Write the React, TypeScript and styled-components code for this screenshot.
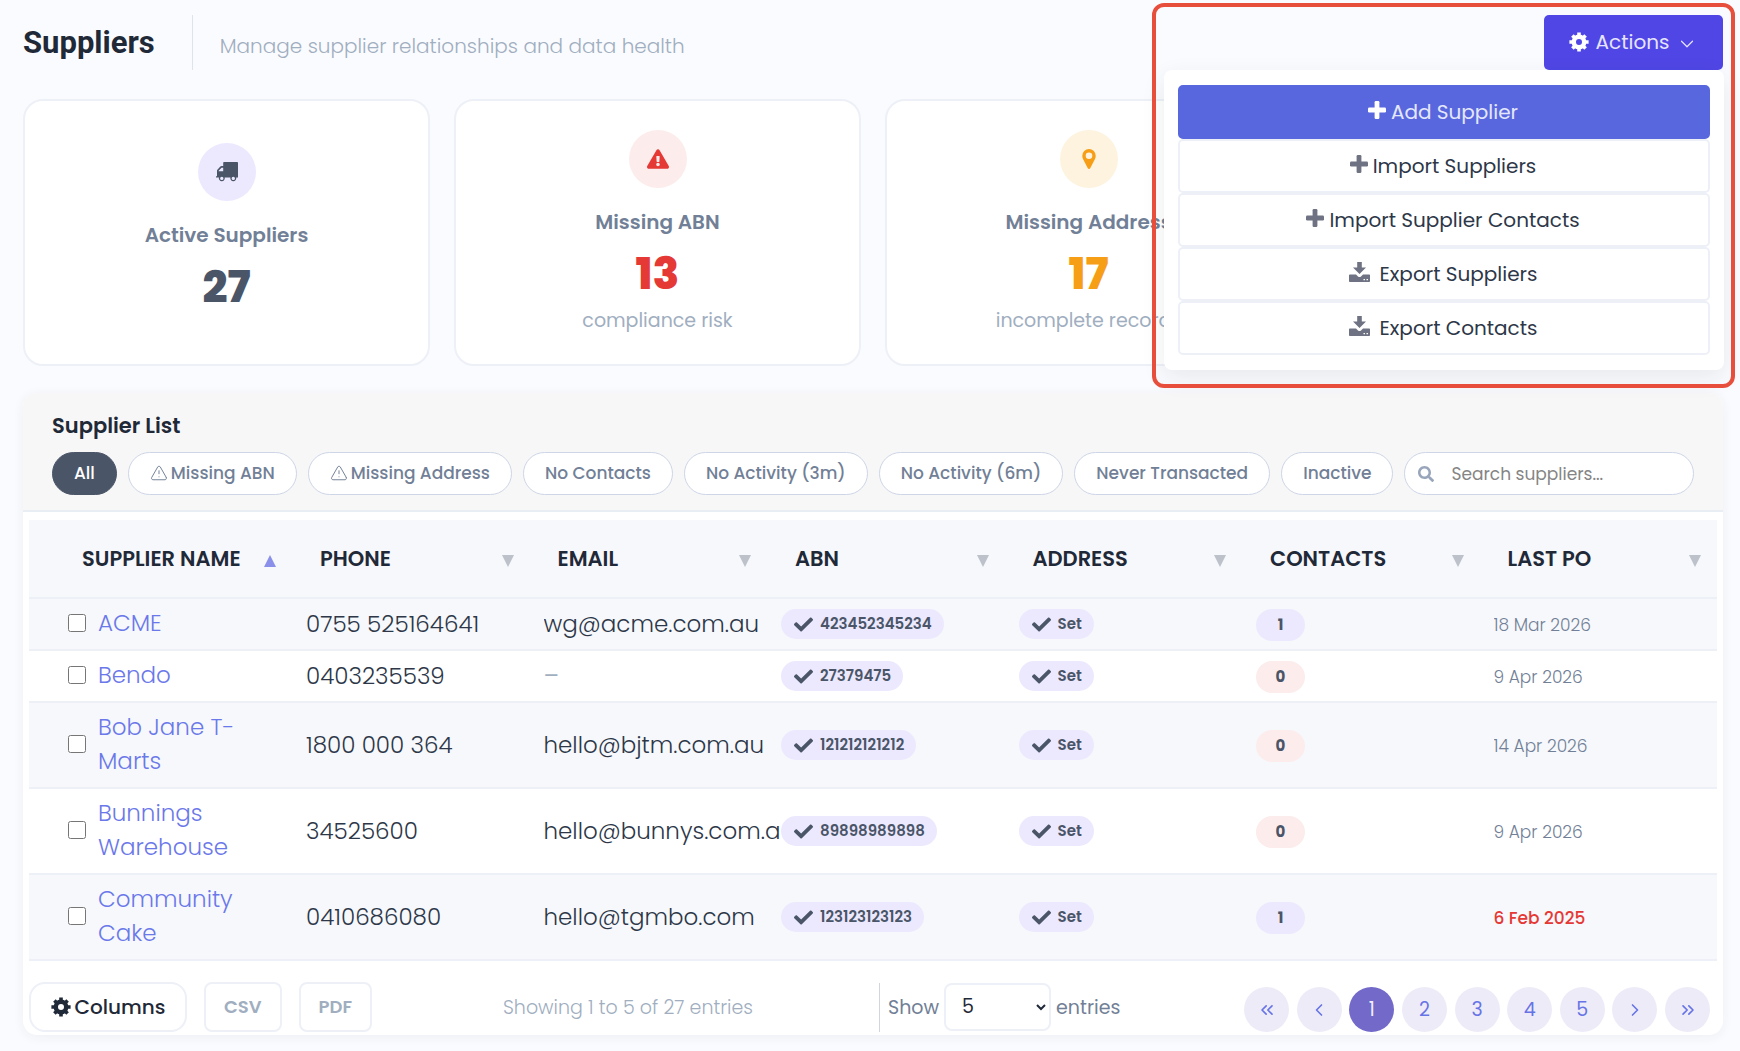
import React, { useState } from "react";
import styled, { createGlobalStyle, css } from "styled-components";
import { FaCheck, FaSearch, FaExclamationTriangle } from "react-icons/fa";
import { ChevronDown, ChevronLeft, ChevronRight, ChevronsLeft, ChevronsRight, TriangleAlert } from "lucide-react";

const font = `Poppins, Inter, "Open Sans", sans-serif`;

const color = {
  ink: "#2d3748",
  slate: "#4a5568",
  grey: "#718096",
  mute: "#a0aec0",
  line: "#edf0f7",
  pillLine: "#cdd5e6",
  lilac: "#ece9fe",
  rose: "#fdecec",
  link: "#6b78ea",
  red: "#e53935",
  orange: "#f59e16",
};

const GlobalStyle = createGlobalStyle`
  *, *::before, *::after { box-sizing: border-box; }
  body { margin: 0; background: #fafbfe; color: ${color.ink}; font-family: ${font}; }
  button, input, select { font-family: inherit; margin: 0; }
`;

const Page = styled.main`
  position: relative;
  padding: 15px 17px 16px 23px;
`;

const Header = styled.header`
  display: flex;
  align-items: stretch;
  height: 55px;
  margin-bottom: 29px;
`;

const Title = styled.h1`
  margin: 0;
  padding: 1px 37px 0 0;
  border-right: 1px solid #dfe3ea;
  font-family: Roboto, sans-serif;
  font-size: 31px;
  line-height: 54px;
  font-weight: 700;
  color: #1f2937;
`;

const Subtitle = styled.p`
  margin: 0 auto 0 27px;
  padding-top: 4px;
  font-size: 20px;
  line-height: 54px;
  font-weight: 300;
  color: ${color.mute};
`;

const Menu = styled.div`
  position: relative;
  z-index: 2;
`;

const ActionsButton = styled.button`
  display: flex;
  align-items: center;
  justify-content: center;
  gap: 7px;
  width: 179px;
  height: 55px;
  padding: 0 0 2px;
  border: 0;
  border-radius: 5px;
  background: #4f46e5;
  color: #e6e4ff;
  font-size: 20px;
  svg:first-child { color: #fff; }
  svg:last-child { margin-top: 4px; }
`;

const MenuList = styled.div`
  position: absolute;
  top: 100%;
  right: -1px;
  display: flex;
  flex-direction: column;
  width: 560px;
  padding: 15px 14px;
  border-radius: 8px;
  background: #fff;
  box-shadow: 0 8px 24px rgba(40, 50, 70, 0.09);
`;

const MenuItem = styled.button<{ $primary?: boolean; $gap: number }>`
  display: flex;
  align-items: center;
  justify-content: center;
  gap: ${(p) => p.$gap}px;
  height: 54px;
  padding: 0 2px 1px 0;
  border: 2px solid ${color.line};
  border-radius: 5px;
  background: #fff;
  color: ${color.ink};
  font-size: 20px;
  svg { margin-bottom: 3px; color: #6f7282; }
  ${(p) =>
    p.$primary &&
    css`
      border-color: #5867dd;
      background: #5867dd;
      color: #e4e7fc;
      svg { color: #fff; }
    `}
`;

const Highlight = styled.div`
  position: absolute;
  top: 3px;
  right: 5px;
  z-index: 3;
  width: 583px;
  height: 385px;
  border: 4px solid #e74f3c;
  border-radius: 12px;
  pointer-events: none;
`;

const Cards = styled.section`
  display: grid;
  grid-template-columns: repeat(4, 1fr);
  gap: 24px;
  margin-bottom: 27px;
`;

const Card = styled.article`
  display: flex;
  flex-direction: column;
  align-items: center;
  justify-content: center;
  height: 267px;
  padding-bottom: 2px;
  border: 2px solid ${color.line};
  border-radius: 20px;
  background: #fff;
`;

const CardIcon = styled.span<{ $bg: string; $fg: string }>`
  display: flex;
  align-items: center;
  justify-content: center;
  width: 58px;
  height: 58px;
  margin-bottom: 21px;
  border-radius: 50%;
  background: ${(p) => p.$bg};
  color: ${(p) => p.$fg};
`;

const CardLabel = styled.h2`
  margin: 0;
  font-size: 20px;
  line-height: 27px;
  font-weight: 600;
  color: ${color.grey};
`;

const CardValue = styled.strong<{ $fg: string }>`
  padding: 11px 0 6px;
  font-size: 44px;
  line-height: 54px;
  font-weight: 800;
  color: ${(p) => p.$fg};
`;

const CardNote = styled.span`
  font-size: 19px;
  line-height: 27px;
  color: ${color.mute};
`;

const Panel = styled.section`
  border-radius: 14px;
  background: #fff;
  box-shadow: 0 2px 12px rgba(40, 50, 80, 0.06);
`;

const PanelHead = styled.div`
  padding: 18px 29px 15px;
  border-bottom: 2px solid #e9edf4;
  border-radius: 14px 14px 0 0;
  background: #f7f7f7;
`;

const PanelTitle = styled.h2`
  margin: 0 0 11px;
  font-size: 21px;
  line-height: 30px;
  font-weight: 600;
  color: #1f2937;
`;

const Filters = styled.div`
  display: flex;
  gap: 11px;
`;

const Pill = styled.button<{ $active?: boolean }>`
  display: flex;
  flex: none;
  align-items: center;
  gap: 3px;
  height: 43px;
  padding: 0 21px 1px;
  border: 1px solid ${(p) => (p.$active ? color.slate : color.pillLine)};
  border-radius: 22px;
  background: ${(p) => (p.$active ? color.slate : "#fff")};
  color: ${(p) => (p.$active ? "#fff" : color.grey)};
  font-size: 17px;
  font-weight: 500;
`;

const Search = styled.label`
  display: flex;
  flex: 1;
  align-items: center;
  gap: 17px;
  min-width: 0;
  height: 43px;
  padding: 0 13px;
  border: 1px solid ${color.pillLine};
  border-radius: 22px;
  background: #fff;
  color: #98a5ba;
  svg { flex: none; }
`;

const SearchInput = styled.input`
  flex: 1;
  min-width: 0;
  padding: 0;
  border: 0;
  outline: 0;
  background: transparent;
  font-size: 17px;
  color: ${color.slate};
  &::placeholder { color: #858585; }
`;

const TableWrap = styled.div`
  margin: 8px 6px 0;
  overflow: hidden;
`;

const Table = styled.table`
  width: calc(100% + 14px);
  table-layout: fixed;
  border-collapse: collapse;
`;

const Th = styled.th`
  height: 78px;
  padding: 0 30px 1px 14px;
  border-bottom: 2px solid ${color.line};
  background: #f6f8fc;
  font-size: 21px;
  font-weight: 600;
  text-align: left;
  color: #1f2937;
  &:first-child { width: 277px; padding-left: 53px; }
`;

const ThInner = styled.div`
  display: flex;
  align-items: center;
  justify-content: space-between;
  white-space: nowrap;
`;

const Arrow = styled.svg<{ $active?: boolean }>`
  flex: none;
  width: 12px;
  height: 12px;
  margin-top: 6px;
  fill: ${(p) => (p.$active ? "#8a90ea" : "#bcc1ca")};
`;

const Row = styled.tr`
  background: #fff;
  &:nth-child(odd) { background: #f6f8fc; }
`;

const Td = styled.td`
  padding: 8px 0;
  border-bottom: 2px solid ${color.line};
  overflow: hidden;
  font-size: 23px;
  line-height: 34px;
  font-weight: 300;
  white-space: nowrap;
  vertical-align: middle;
  &:first-child { padding: 7px 53px 9px 39px; white-space: normal; }
`;

const NameCell = styled.div`
  display: flex;
  align-items: center;
  gap: 12px;
`;

const Check = styled.input`
  flex: none;
  width: 18px;
  height: 18px;
`;

const NameLink = styled.a`
  color: ${color.link};
  text-decoration: none;
`;

const Dash = styled.span`
  font-weight: 400;
  color: ${color.mute};
`;

const Badge = styled.span`
  display: flex;
  align-items: center;
  gap: 7px;
  width: fit-content;
  height: 30px;
  padding: 0 12px 0 13px;
  border-radius: 15px;
  background: ${color.lilac};
  color: ${color.slate};
  font-size: 15px;
  font-weight: 600;
`;

const Count = styled.span<{ $empty: boolean }>`
  display: flex;
  align-items: center;
  justify-content: center;
  width: 49px;
  height: 32px;
  margin-top: 2px;
  border-radius: 16px;
  background: ${(p) => (p.$empty ? color.rose : color.lilac)};
  color: ${color.slate};
  font-size: 15px;
  font-weight: 700;
`;

const DateText = styled.time<{ $late?: boolean }>`
  display: block;
  padding-top: 3px;
  font-size: 17px;
  line-height: 31px;
  font-weight: ${(p) => (p.$late ? 500 : 300)};
  color: ${(p) => (p.$late ? color.red : color.grey)};
`;

const Footer = styled.footer`
  display: grid;
  grid-template-columns: 1fr 1fr;
  gap: 12px;
  padding: 21px 6px 3px;
`;

const FooterHalf = styled.div`
  display: flex;
  align-items: center;
  gap: 17px;
`;

const ColumnsButton = styled.button`
  display: flex;
  align-items: center;
  justify-content: center;
  gap: 4px;
  width: 158px;
  height: 50px;
  padding: 0;
  border: 2px solid ${color.line};
  border-radius: 16px;
  background: #fff;
  color: #1f2937;
  font-size: 20px;
  font-weight: 500;
`;

const ExportButton = styled.button`
  height: 50px;
  padding: 0 18px 2px;
  border: 2px solid ${color.line};
  border-radius: 8px;
  background: #fff;
  color: ${color.mute};
  font-size: 18px;
  font-weight: 600;
`;

const Showing = styled.span`
  flex: 1;
  font-size: 19px;
  font-weight: 300;
  text-align: center;
  color: ${color.mute};
`;

const PageSize = styled.label`
  display: flex;
  align-items: center;
  gap: 5px;
  height: 49px;
  padding-left: 8px;
  border-left: 1px solid #d2d5da;
  font-size: 19px;
  color: ${color.grey};
`;

const SizeSelect = styled.select`
  width: 107px;
  height: 48px;
  padding: 0 0 2px 12px;
  border: 2px solid ${color.line};
  border-radius: 8px;
  background: #fff;
  color: #1f2937;
  font-size: 19px;
`;

const Pager = styled.nav`
  display: flex;
  justify-content: space-between;
  width: 466px;
  margin: 5px 7px 0 auto;
`;

const PageButton = styled.button<{ $active?: boolean }>`
  display: flex;
  align-items: center;
  justify-content: center;
  width: 45px;
  height: 45px;
  padding: 0;
  border: 0;
  border-radius: 50%;
  background: ${(p) => (p.$active ? "#7269c9" : "#eeebf8")};
  color: ${(p) => (p.$active ? "#f1effc" : "#6674e6")};
  font-size: 19px;
`;

const GearIcon = () => (
  <svg width="20" height="20" viewBox="-10 -10 20 20" fill="none" stroke="currentColor">
    <circle r="5.200" strokeWidth="4.400" />
    <path
      strokeWidth="3.600"
      d="M0-6V-9.600M0 6V9.600M-6 0H-9.600M6 0H9.600M4.300-4.300 6.600-6.600M4.300 4.300 6.600 6.600M-4.300 4.300-6.600 6.600M-4.300-4.300-6.600-6.600"
    />
  </svg>
);

const PlusIcon = () => (
  <svg width="18" height="18" viewBox="0 0 18 18" fill="currentColor">
    <rect x="6.600" y="0" width="4.800" height="18" rx="1.200" />
    <rect x="0" y="6.600" width="18" height="4.800" rx="1.200" />
  </svg>
);

const TruckIcon = () => (
  <svg width="22" height="20" viewBox="0 0 22 20" fill="currentColor" fillRule="evenodd">
    <path d="M8 0h13.200c.5 0 .8.300.8.800V15.500h-1.800a3 3 0 1 1-5.800 0H8.700a3 3 0 1 1-5.800 0H0V14.300h1V8.800c0-.6.200-1 .6-1.400l2.500-2.600c.4-.5.900-.7 1.500-.7h1.600V.8c0-.5.300-.8.800-.8zM2.600 9.300h4.600V5.700H6c-.3 0-.5.100-.7.300L2.900 8.500c-.2.200-.3.500-.3.800zM5.800 14.700a1.700 1.700 0 1 0 0 3.400 1.700 1.700 0 0 0 0-3.400zM17.300 14.700a1.700 1.700 0 1 0 0 3.400 1.700 1.700 0 0 0 0-3.400z" />
  </svg>
);

const PinIcon = () => (
  <svg width="14" height="20" viewBox="0 0 14 20" fill="currentColor" fillRule="evenodd">
    <path d="M7 0a6.700 6.700 0 0 1 6.700 6.800c0 1.200-.2 2.200-.7 3.200L8.200 19.200c-.5 1-1.900 1-2.400 0L1 10C.5 9 .3 8 .3 6.800A6.700 6.700 0 0 1 7 0zm0 3.500a3.300 3.300 0 1 0 0 6.600 3.300 3.300 0 0 0 0-6.600z" />
  </svg>
);

const DownloadIcon = () => (
  <svg width="21" height="20" viewBox="0 0 21 20" fill="currentColor" fillRule="evenodd">
    <path d="M8.200 0h4.600v5.500h4.200L10.500 12 4 5.500h4.200z" />
    <path d="M0 13.500c0-.6.500-1 1-1h6l2 1.900c.9.800 2.100.8 3 0l2-1.900H20c.6 0 1 .4 1 1V19c0 .6-.4 1-1 1H1c-.5 0-1-.4-1-1zM14.500 17v1.200H16V17zm3 0v1.200H19V17z" />
  </svg>
);

const columns = ["SUPPLIER NAME", "PHONE", "EMAIL", "ABN", "ADDRESS", "CONTACTS", "LAST PO"];

const suppliers = [
  { name: "ACME", phone: "0755 525164641", email: "wg@acme.com.au", abn: "423452345234", contacts: 1, lastPo: "18 Mar 2026" },
  { name: "Bendo", phone: "0403235539", email: "", abn: "27379475", contacts: 0, lastPo: "9 Apr 2026" },
  { name: "Bob Jane T-Marts", phone: "1800 000 364", email: "hello@bjtm.com.au", abn: "121212121212", contacts: 0, lastPo: "14 Apr 2026" },
  { name: "Bunnings Warehouse", phone: "34525600", email: "hello@bunnys.com.au", abn: "89898989898", contacts: 0, lastPo: "9 Apr 2026" },
  { name: "Community Cake", phone: "0410686080", email: "hello@tgmbo.com", abn: "123123123123", contacts: 1, lastPo: "6 Feb 2025", late: true },
];

const filters = [
  { label: "All" },
  { label: "Missing ABN", warn: true },
  { label: "Missing Address", warn: true },
  { label: "No Contacts" },
  { label: "No Activity (3m)" },
  { label: "No Activity (6m)" },
  { label: "Never Transacted" },
  { label: "Inactive" },
];

const pages = ["1", "2", "3", "4", "5"];

export default function App() {
  const [filter, setFilter] = useState("All");
  const [page, setPage] = useState("1");

  return (
    <Page>
      <GlobalStyle />
      <Header>
        <Title>Suppliers</Title>
        <Subtitle>Manage supplier relationships and data health</Subtitle>
        <Menu>
          <ActionsButton type="button" aria-haspopup="true" aria-expanded="true">
            <GearIcon />
            Actions
            <ChevronDown size={22} strokeWidth={1.3} />
          </ActionsButton>
          <MenuList>
            <MenuItem type="button" $primary $gap={5}><PlusIcon />Add Supplier</MenuItem>
            <MenuItem type="button" $gap={5}><PlusIcon />Import Suppliers</MenuItem>
            <MenuItem type="button" $gap={5}><PlusIcon />Import Supplier Contacts</MenuItem>
            <MenuItem type="button" $gap={10}><DownloadIcon />Export Suppliers</MenuItem>
            <MenuItem type="button" $gap={10}><DownloadIcon />Export Contacts</MenuItem>
          </MenuList>
        </Menu>
      </Header>
      <Highlight />

      <Cards>
        <Card>
          <CardIcon $bg={color.lilac} $fg={color.slate}><TruckIcon /></CardIcon>
          <CardLabel>Active Suppliers</CardLabel>
          <CardValue $fg={color.slate}>27</CardValue>
        </Card>
        <Card>
          <CardIcon $bg={color.rose} $fg={color.red}><FaExclamationTriangle size={22} /></CardIcon>
          <CardLabel>Missing ABN</CardLabel>
          <CardValue $fg={color.red}>13</CardValue>
          <CardNote>compliance risk</CardNote>
        </Card>
        <Card>
          <CardIcon $bg="#fef3df" $fg={color.orange}><PinIcon /></CardIcon>
          <CardLabel>Missing Address</CardLabel>
          <CardValue $fg={color.orange}>17</CardValue>
          <CardNote>incomplete records</CardNote>
        </Card>
      </Cards>

      <Panel>
        <PanelHead>
          <PanelTitle>Supplier List</PanelTitle>
          <Filters>
            {filters.map((f) => (
              <Pill key={f.label} type="button" $active={filter === f.label} onClick={() => setFilter(f.label)}>
                {f.warn && <TriangleAlert size={18} strokeWidth={1.3} />}
                {f.label}
              </Pill>
            ))}
            <Search>
              <FaSearch size={16} />
              <SearchInput type="text" placeholder="Search suppliers..." aria-label="Search suppliers" />
            </Search>
          </Filters>
        </PanelHead>

        <TableWrap>
          <Table>
            <thead>
              <tr>
                {columns.map((c, i) => (
                  <Th key={c} scope="col">
                    <ThInner>
                      {c}
                      <Arrow $active={i === 0} viewBox="0 0 12 12" aria-hidden="true">
                        <path d={i === 0 ? "M0 12 6 0l6 12z" : "M0 0h12L6 12z"} />
                      </Arrow>
                    </ThInner>
                  </Th>
                ))}
              </tr>
            </thead>
            <tbody>
              {suppliers.map((s) => (
                <Row key={s.name}>
                  <Td>
                    <NameCell>
                      <Check type="checkbox" aria-label={`Select ${s.name}`} />
                      <NameLink href="#">{s.name}</NameLink>
                    </NameCell>
                  </Td>
                  <Td>{s.phone}</Td>
                  <Td>{s.email || <Dash>–</Dash>}</Td>
                  <Td><Badge><FaCheck size={19} />{s.abn}</Badge></Td>
                  <Td><Badge><FaCheck size={19} />Set</Badge></Td>
                  <Td><Count $empty={s.contacts === 0}>{s.contacts}</Count></Td>
                  <Td><DateText $late={s.late}>{s.lastPo}</DateText></Td>
                </Row>
              ))}
            </tbody>
          </Table>
        </TableWrap>

        <Footer>
          <FooterHalf>
            <ColumnsButton type="button"><GearIcon />Columns</ColumnsButton>
            <ExportButton type="button">CSV</ExportButton>
            <ExportButton type="button">PDF</ExportButton>
            <Showing>Showing 1 to 5 of 27 entries</Showing>
          </FooterHalf>
          <FooterHalf>
            <PageSize>
              Show
              <SizeSelect defaultValue="5">
                <option>5</option>
                <option>10</option>
                <option>25</option>
              </SizeSelect>
              entries
            </PageSize>
            <Pager aria-label="Pagination">
              <PageButton type="button" aria-label="First page"><ChevronsLeft size={20} /></PageButton>
              <PageButton type="button" aria-label="Previous page"><ChevronLeft size={20} /></PageButton>
              {pages.map((p) => (
                <PageButton key={p} type="button" $active={page === p} onClick={() => setPage(p)}>{p}</PageButton>
              ))}
              <PageButton type="button" aria-label="Next page"><ChevronRight size={20} /></PageButton>
              <PageButton type="button" aria-label="Last page"><ChevronsRight size={20} /></PageButton>
            </Pager>
          </FooterHalf>
        </Footer>
      </Panel>
    </Page>
  );
}
